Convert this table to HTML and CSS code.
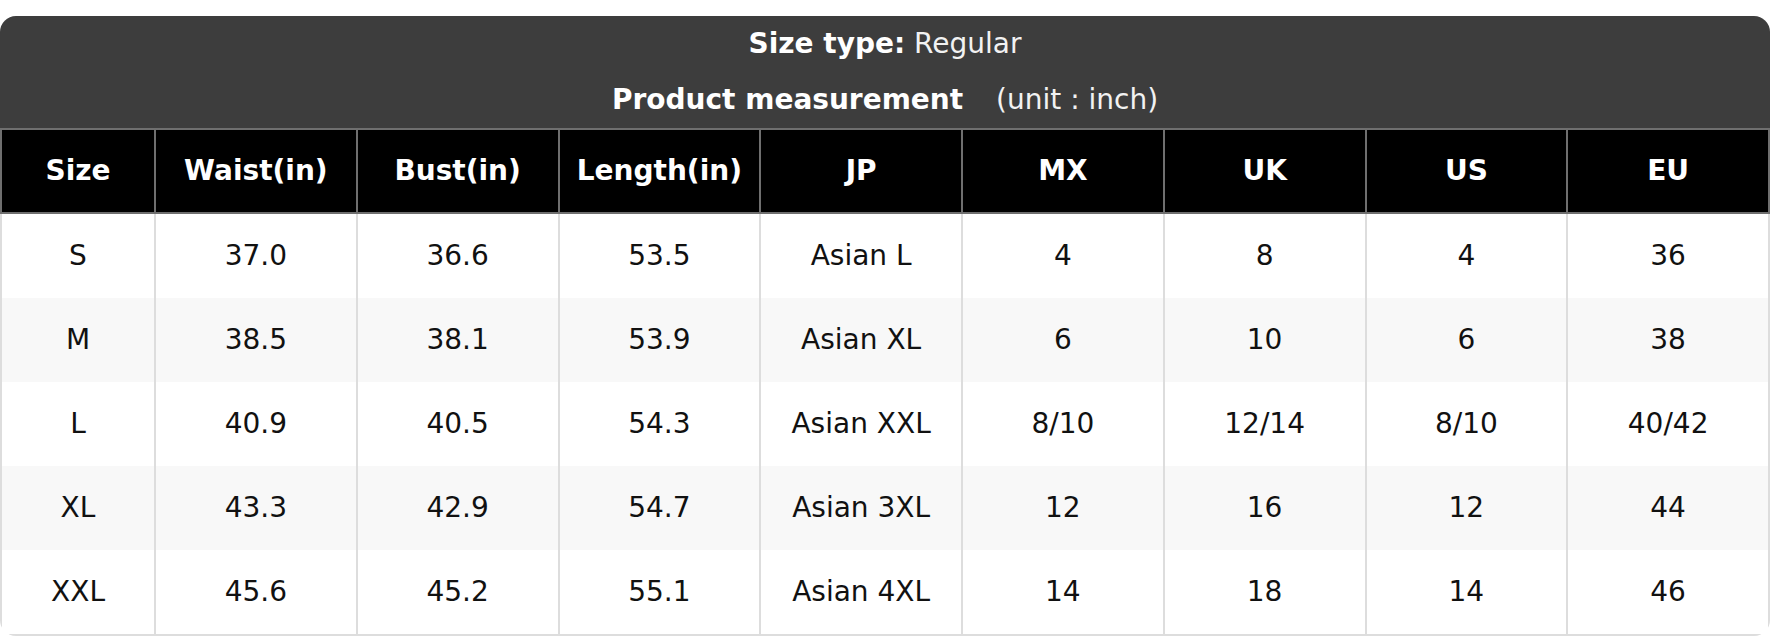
FILE: index.html
```html
<!DOCTYPE html>
<html lang="en">
<head>
<meta charset="utf-8">
<title>Size chart</title>
<link rel="stylesheet" href="styles.css">
</head>
<body>
<div class="chart">
  <div class="chart-title">
    <div class="title-line"><span class="label">Size type:</span> <span class="value">Regular</span></div>
    <div class="title-line"><span class="label">Product measurement</span> <span class="unit">(unit : inch)</span></div>
  </div>
  <table class="size-table">
    <colgroup>
      <col class="col-first">
      <col><col><col><col><col><col><col><col>
    </colgroup>
    <thead>
      <tr>
        <th>Size</th><th>Waist(in)</th><th>Bust(in)</th><th>Length(in)</th><th>JP</th><th>MX</th><th>UK</th><th>US</th><th>EU</th>
      </tr>
    </thead>
    <tbody>
      <tr><td>S</td><td>37.0</td><td>36.6</td><td>53.5</td><td>Asian L</td><td>4</td><td>8</td><td>4</td><td>36</td></tr>
      <tr><td>M</td><td>38.5</td><td>38.1</td><td>53.9</td><td>Asian XL</td><td>6</td><td>10</td><td>6</td><td>38</td></tr>
      <tr><td>L</td><td>40.9</td><td>40.5</td><td>54.3</td><td>Asian XXL</td><td>8/10</td><td>12/14</td><td>8/10</td><td>40/42</td></tr>
      <tr><td>XL</td><td>43.3</td><td>42.9</td><td>54.7</td><td>Asian 3XL</td><td>12</td><td>16</td><td>12</td><td>44</td></tr>
      <tr><td>XXL</td><td>45.6</td><td>45.2</td><td>55.1</td><td>Asian 4XL</td><td>14</td><td>18</td><td>14</td><td>46</td></tr>
    </tbody>
  </table>
</div>
</body>
</html>
```

FILE: styles.css
```css
html, body {
  margin: 0;
  padding: 0;
  background: #ffffff;
}

body {
  font-family: "DejaVu Sans", Verdana, sans-serif;
  font-size: 28px;
  color: #111111;
}

.chart {
  margin-top: 16px;
  width: 1770px;
  border-radius: 16px;
  overflow: hidden;
}

.chart-title {
  background: #3d3d3d;
  color: #ffffff;
  text-align: center;
  padding: 11px 0 11px;
  display: flex;
  flex-direction: column;
  gap: 22px;
}

.title-line {
  line-height: 34px;
}

.label {
  font-weight: bold;
}

.value {
  color: #f2f2f2;
}

.unit {
  color: #f2f2f2;
  margin-left: 24px;
}

.size-table {
  width: 100%;
  border-collapse: collapse;
  table-layout: fixed;
}

.col-first {
  width: 154px;
}

.size-table th,
.size-table td {
  text-align: center;
  line-height: 34px;
  padding: 0;
}

.size-table th {
  background: #000000;
  color: #ffffff;
  font-weight: bold;
  height: 82px;
  border: 2px solid #6f6f6f;
}

.size-table td {
  height: 84px;
  border: 2px solid #dddddd;
  background: #ffffff;
}

.size-table tbody tr:nth-child(even) td {
  background: #f8f8f8;
}

.size-table tbody tr td {
  border-top: 0;
}

.size-table tbody tr:not(:last-child) td {
  border-bottom: 0;
}
```
